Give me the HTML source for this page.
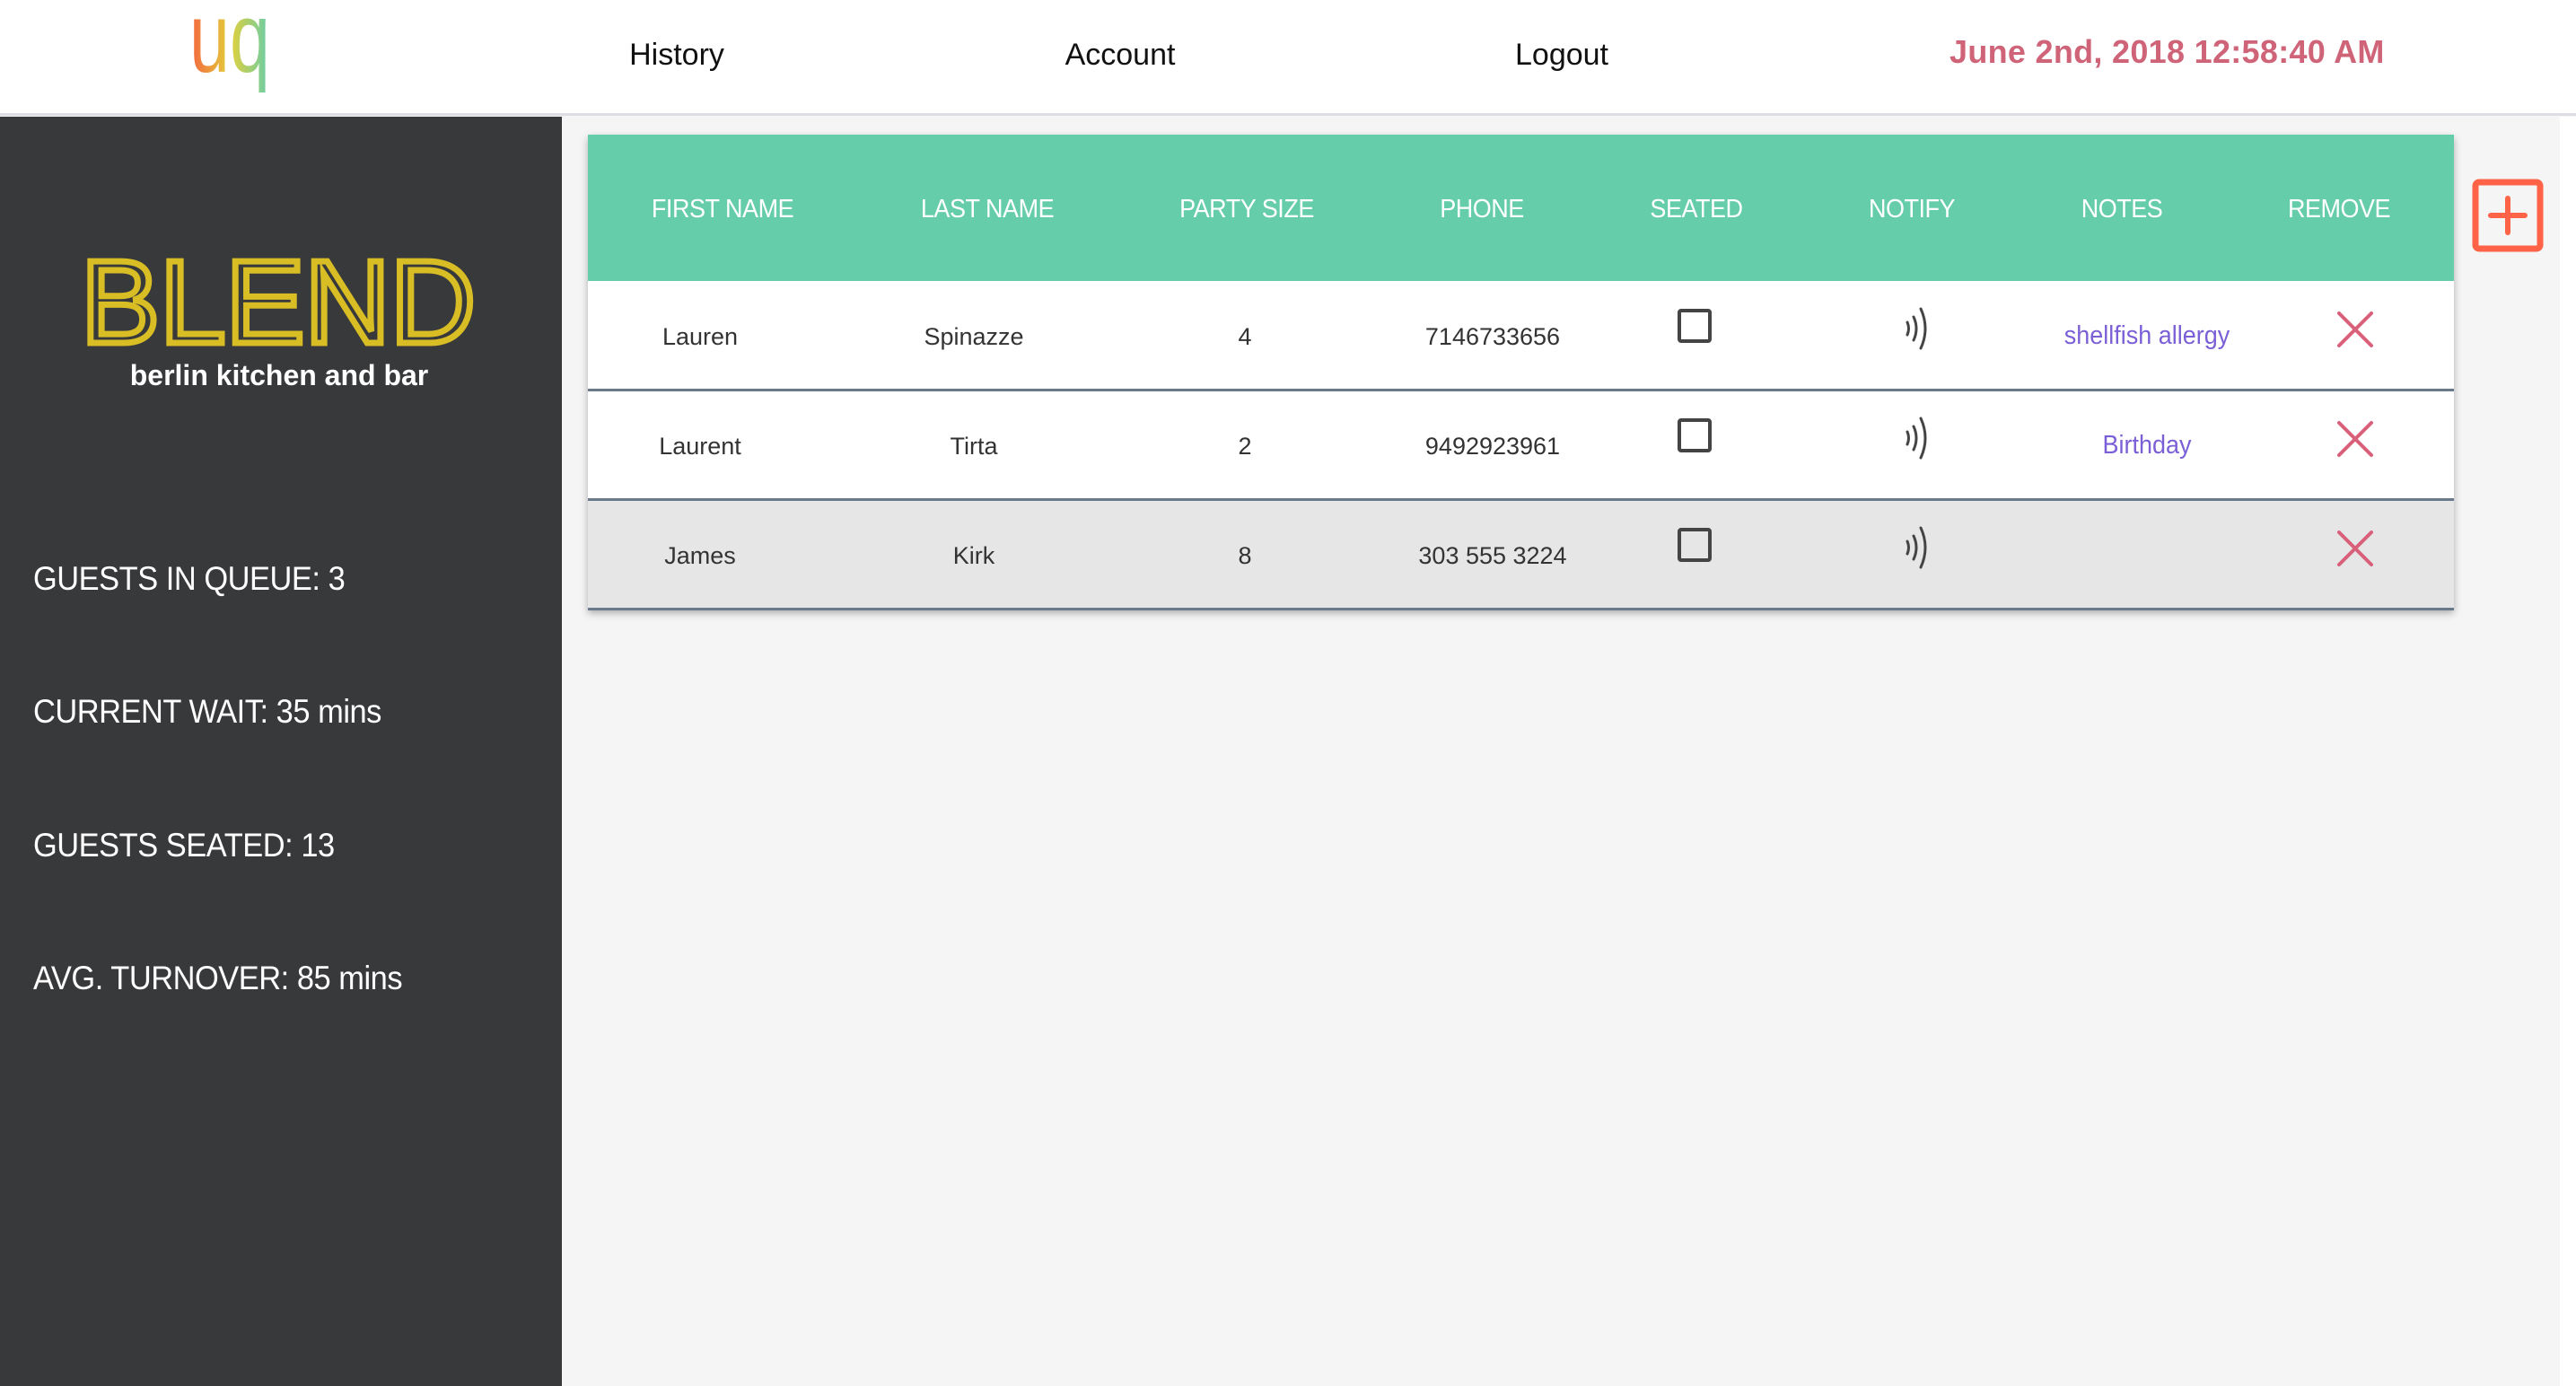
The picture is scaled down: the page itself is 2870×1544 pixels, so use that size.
<!DOCTYPE html>
<html><head><meta charset="utf-8"><style>
*{margin:0;padding:0;box-sizing:border-box}
body{width:2870px;height:1544px;position:relative;background:#f5f5f5;font-family:"Liberation Sans",sans-serif;overflow:hidden}
.a{position:absolute}
.hdr{left:0;top:0;width:2870px;height:129px;background:#fff;border-bottom:3px solid #dedde3}
.nav{top:42px;font-size:34px;color:#111;transform:translateX(-50%);white-space:nowrap}
.side{left:0;top:130px;width:626px;height:1414px;background:#38393b}
.stat{left:37px;font-size:37px;color:#fff;white-space:nowrap;letter-spacing:-0.5px;transform:scaleX(0.93);transform-origin:left}
.tbl{left:655px;top:150px;width:2079px;height:529px;box-shadow:0 4px 8px rgba(0,0,0,.3);background:#fff}
.th{top:150px;height:163px;left:655px;width:2079px;background:#66cdaa}
.ht{top:217px;font-size:29px;color:#fff;transform:translateX(-50%) scaleX(0.93);white-space:nowrap;letter-spacing:-0.5px}
.rt{font-size:27px;color:#333;transform:translateX(-50%);white-space:nowrap;margin-top:2px}
.sep{left:655px;width:2079px;height:3px;background:#6b7a8a}
.cb{width:38px;height:38px;border:4px solid #444;border-radius:4px;transform:translateX(-50%)}
.note{font-size:29px;color:#7b5fd6;transform:translateX(-50%) scaleX(0.93);white-space:nowrap;margin-top:2px}
</style></head><body>
<div class="a hdr"></div>
<svg class="a" style="left:205px;top:5px" width="110" height="105">
<defs><linearGradient id="g" x1="0" x2="1"><stop offset="0" stop-color="#f4623f"/><stop offset=".5" stop-color="#e3d03a"/><stop offset="1" stop-color="#66cdaa"/></linearGradient></defs>
<text x="6" y="75" font-size="110" font-family="Liberation Sans" fill="url(#g)" textLength="90" lengthAdjust="spacingAndGlyphs">uq</text>
</svg>
<div class="a nav" style="left:754px">History</div>
<div class="a nav" style="left:1248px">Account</div>
<div class="a nav" style="left:1740px">Logout</div>
<div class="a" style="left:2172px;top:37px;font-size:36px;color:#cf6479;font-weight:bold;white-space:nowrap;letter-spacing:0.3px">June 2nd, 2018 12:58:40 AM</div>

<div class="a side"></div>
<svg class="a" style="left:80px;top:280px" width="470" height="115">
<text x="10" y="102" font-size="132" font-family="Liberation Sans" textLength="440" lengthAdjust="spacingAndGlyphs" fill="#38393b" stroke="#d8bd24" stroke-width="7">BLEND</text>
</svg>
<div class="a" style="left:311px;top:400px;transform:translateX(-50%);font-size:32px;color:#fff;font-weight:bold;white-space:nowrap">berlin kitchen and bar</div>
<div class="a stat" style="top:624px">GUESTS IN QUEUE: 3</div>
<div class="a stat" style="top:772px">CURRENT WAIT: 35 mins</div>
<div class="a stat" style="top:921px">GUESTS SEATED: 13</div>
<div class="a stat" style="top:1069px">AVG. TURNOVER: 85 mins</div>

<div class="a tbl"></div>
<div class="a th"></div>
<div class="a ht" style="left:805px">FIRST NAME</div>
<div class="a ht" style="left:1100px">LAST NAME</div>
<div class="a ht" style="left:1389px">PARTY SIZE</div>
<div class="a ht" style="left:1651px">PHONE</div>
<div class="a ht" style="left:1890px">SEATED</div>
<div class="a ht" style="left:2130px">NOTIFY</div>
<div class="a ht" style="left:2364px">NOTES</div>
<div class="a ht" style="left:2606px">REMOVE</div>

<div class="a" style="left:655px;top:556px;width:2079px;height:123px;background:#e6e6e6"></div>
<div class="a sep" style="top:433px"></div>
<div class="a sep" style="top:555px"></div>
<div class="a sep" style="top:677px"></div>

<div class="a rt" style="left:780px;top:358px">Lauren</div>
<div class="a rt" style="left:1085px;top:358px">Spinazze</div>
<div class="a rt" style="left:1387px;top:358px">4</div>
<div class="a rt" style="left:1663px;top:358px">7146733656</div>
<div class="a note" style="left:2392px;top:356px">shellfish allergy</div>

<div class="a rt" style="left:780px;top:480px">Laurent</div>
<div class="a rt" style="left:1085px;top:480px">Tirta</div>
<div class="a rt" style="left:1387px;top:480px">2</div>
<div class="a rt" style="left:1663px;top:480px">9492923961</div>
<div class="a note" style="left:2392px;top:478px">Birthday</div>

<div class="a rt" style="left:780px;top:602px">James</div>
<div class="a rt" style="left:1085px;top:602px">Kirk</div>
<div class="a rt" style="left:1387px;top:602px">8</div>
<div class="a rt" style="left:1663px;top:602px">303 555 3224</div>

<div class="a cb" style="left:1888px;top:344px"></div>
<div class="a cb" style="left:1888px;top:466px"></div>
<div class="a cb" style="left:1888px;top:588px"></div>

<svg class="a" style="left:2115px;top:340px" width="40" height="52"><g fill="none" stroke="#444" stroke-width="3" stroke-linecap="round"><path d="M10 19q3 7 0 14"/><path d="M17 13q6 13 0 26"/><path d="M25 4q10 22 0 44"/></g></svg>
<svg class="a" style="left:2115px;top:462px" width="40" height="52"><g fill="none" stroke="#444" stroke-width="3" stroke-linecap="round"><path d="M10 19q3 7 0 14"/><path d="M17 13q6 13 0 26"/><path d="M25 4q10 22 0 44"/></g></svg>
<svg class="a" style="left:2115px;top:584px" width="40" height="52"><g fill="none" stroke="#444" stroke-width="3" stroke-linecap="round"><path d="M10 19q3 7 0 14"/><path d="M17 13q6 13 0 26"/><path d="M25 4q10 22 0 44"/></g></svg>

<svg class="a" style="left:2602px;top:345px" width="44" height="44"><path d="M4 4L40 40M40 4L4 40" stroke="#d9607a" stroke-width="4" stroke-linecap="round"/></svg>
<svg class="a" style="left:2602px;top:467px" width="44" height="44"><path d="M4 4L40 40M40 4L4 40" stroke="#d9607a" stroke-width="4" stroke-linecap="round"/></svg>
<svg class="a" style="left:2602px;top:589px" width="44" height="44"><path d="M4 4L40 40M40 4L4 40" stroke="#d9607a" stroke-width="4" stroke-linecap="round"/></svg>

<svg class="a" style="left:2754px;top:199px" width="80" height="82"><rect x="4" y="4" width="72" height="74" rx="4" fill="none" stroke="#ff6347" stroke-width="7"/><path d="M40 22V60M21 41H59" stroke="#ff6347" stroke-width="6" stroke-linecap="round"/></svg>
<div class="a" style="left:2852px;top:130px;width:18px;height:1414px;background:#fff"></div>
</body></html>
